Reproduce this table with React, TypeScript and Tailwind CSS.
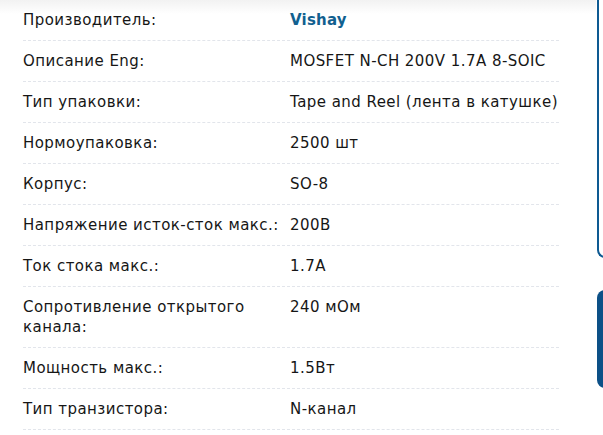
import React from "react";

const rows: { label: string; value: string; bold?: boolean }[] = [
  { label: "Производитель:", value: "Vishay", bold: true },
  { label: "Описание Eng:", value: "MOSFET N-CH 200V 1.7A 8-SOIC" },
  { label: "Тип упаковки:", value: "Tape and Reel (лента в катушке)" },
  { label: "Нормоупаковка:", value: "2500 шт" },
  { label: "Корпус:", value: "SO-8" },
  { label: "Напряжение исток-сток макс.:", value: "200В" },
  { label: "Ток стока макс.:", value: "1.7A" },
  { label: "Сопротивление открытого канала:", value: "240 мОм" },
  { label: "Мощность макс.:", value: "1.5Вт" },
  { label: "Тип транзистора:", value: "N-канал" },
];

export default function App() {
  return (
    <div className="relative flex h-[435px] w-[603px] overflow-hidden bg-white font-['DejaVu_Sans',sans-serif] text-[15px] tracking-[0.45px] text-[#161616]">
      <div className="pointer-events-none absolute left-0 top-0 h-[14px] w-[596px] bg-gradient-to-b from-[#f2f2f2] to-white" />
      <div className="relative ml-[23px] w-[536px]">
        {rows.map((r) => (
          <div
            key={r.label}
            className="grid grid-cols-[267px_1fr] border-b border-dashed border-[#e2e5eb] py-[10px] leading-[20px]"
          >
            <div className="pr-2">{r.label}</div>
            <div className={r.bold ? "font-bold tracking-[0.2px] text-[#11608f]" : ""}>{r.value}</div>
          </div>
        ))}
      </div>
      <div className="ml-auto flex w-[6px] flex-col overflow-hidden">
        <div className="h-[258px] w-[30px] shrink-0 rounded-bl-[8px] border-b-2 border-l-2 border-[#0e5a92]" />
        <div className="mt-[32px] h-[98px] w-[30px] shrink-0 rounded-l-[8px] bg-[#0c5087]" />
      </div>
    </div>
  );
}
